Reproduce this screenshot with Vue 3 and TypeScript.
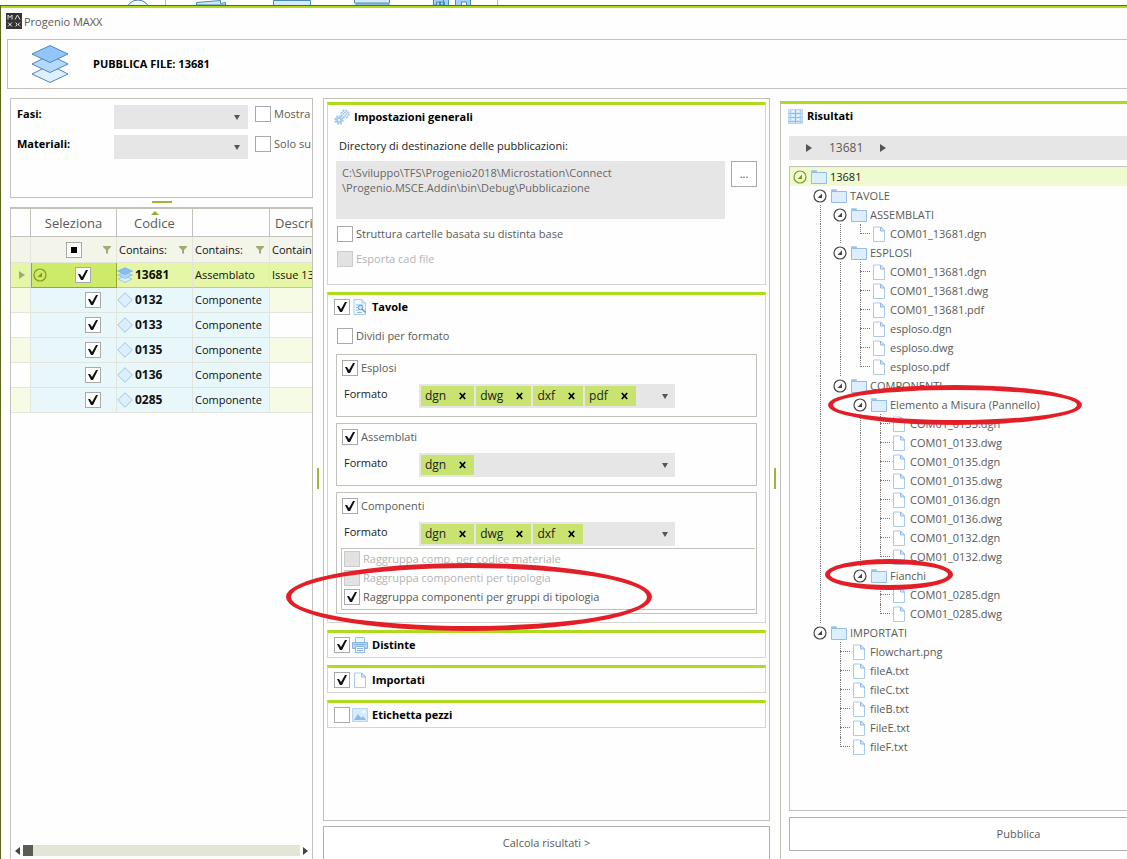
<script setup lang="ts">
import { ref } from 'vue'

interface TreeNode {
  name: string
  children?: TreeNode[]
  mark?: string
}

interface TreeRow {
  name: string
  folder: boolean
  level: number
  guides: boolean[]
  last: boolean
  mark?: string
}

const files = (...names: string[]): TreeNode[] => names.map((name) => ({ name }))

const tree: TreeNode[] = [
  {
    name: '13681',
    children: [
      {
        name: 'TAVOLE',
        children: [
          { name: 'ASSEMBLATI', children: files('COM01_13681.dgn') },
          {
            name: 'ESPLOSI',
            children: files(
              'COM01_13681.dgn',
              'COM01_13681.dwg',
              'COM01_13681.pdf',
              'esploso.dgn',
              'esploso.dwg',
              'esploso.pdf',
            ),
          },
          {
            name: 'COMPONENTI',
            children: [
              {
                name: 'Elemento a Misura (Pannello)',
                mark: 'mark-panel',
                children: files(
                  'COM01_0133.dgn',
                  'COM01_0133.dwg',
                  'COM01_0135.dgn',
                  'COM01_0135.dwg',
                  'COM01_0136.dgn',
                  'COM01_0136.dwg',
                  'COM01_0132.dgn',
                  'COM01_0132.dwg',
                ),
              },
              { name: 'Fianchi', mark: 'mark-sides', children: files('COM01_0285.dgn', 'COM01_0285.dwg') },
            ],
          },
        ],
      },
      {
        name: 'IMPORTATI',
        children: files('Flowchart.png', 'fileA.txt', 'fileC.txt', 'fileB.txt', 'FileE.txt', 'fileF.txt'),
      },
    ],
  },
]

// guides[k] tells whether the ancestor at level k has a later sibling, so its line continues past this row
function flatten(nodes: TreeNode[], level = 0, guides: boolean[] = []): TreeRow[] {
  return nodes.flatMap((node, i) => {
    const last = i === nodes.length - 1
    const row: TreeRow = { name: node.name, folder: !!node.children, level, guides, last, mark: node.mark }
    return [row, ...flatten(node.children ?? [], level + 1, [...guides, !last])]
  })
}

const treeRows = flatten(tree)

const parts = ref([
  { code: '0132', checked: true },
  { code: '0133', checked: true },
  { code: '0135', checked: true },
  { code: '0136', checked: true },
  { code: '0285', checked: true },
])

const outputs = ref([
  { id: 'esplosi', label: 'Esplosi', on: true, formats: ['dgn', 'dwg', 'dxf', 'pdf'] },
  { id: 'assemblati', label: 'Assemblati', on: true, formats: ['dgn'] },
  { id: 'componenti', label: 'Componenti', on: true, formats: ['dgn', 'dwg', 'dxf'] },
])

const extras = ref([
  { id: 'distinte', label: 'Distinte', icon: 'i-print', on: true },
  { id: 'importati', label: 'Importati', icon: 'i-file', on: true },
  { id: 'etichetta', label: 'Etichetta pezzi', icon: 'i-image', on: false },
])

const directory = ref('C:\\Sviluppo\\TFS\\Progenio2018\\Microstation\\Connect\n\\Progenio.MSCE.Addin\\bin\\Debug\\Pubblicazione')

function removeFormat(list: string[], format: string) {
  list.splice(list.indexOf(format), 1)
}
</script>

<template>
  <div class="page">
    <svg class="defs" width="0" height="0" aria-hidden="true">
      <symbol id="i-layers" viewBox="0 0 38 38">
        <path d="M1 29 19 20 37 29 19 37.500z" fill="#deeffd" stroke="#4f87bd" />
        <path d="M1 19 19 10 37 19 19 27.500z" fill="#b5d9fb" stroke="#4f87bd" />
        <path d="M1 9 19 .6 37 9 19 17.500z" fill="#93c6f8" stroke="#4f87bd" />
      </symbol>
      <symbol id="i-layers-small" viewBox="0 0 16 16">
        <path d="M1 12 8 9 15 12 8 15.500z" fill="#d9ecfd" stroke="#8dbbe6" stroke-width=".7" />
        <path d="M.5 8 8 5 15.500 8 8 11.500z" fill="#aed5fa" stroke="#8dbbe6" stroke-width=".7" />
        <path d="M.5 4 8 .8 15.500 4 8 7.500z" fill="#86bdf4" stroke="#7aaee0" stroke-width=".7" />
      </symbol>
      <symbol id="i-diamond" viewBox="0 0 16 16">
        <path d="M8 .7 15.300 8 8 15.300 .7 8z" fill="#ddeefe" stroke="#a3c2e2" />
      </symbol>
      <symbol id="i-funnel" viewBox="0 0 8 8">
        <path d="M0 0h8v1L5 4v4L3 7V4L0 1z" fill="#a0aa78" />
      </symbol>
      <symbol id="i-expander" viewBox="0 0 14 14">
        <circle cx="7" cy="7" r="6" fill="none" stroke="currentColor" stroke-width="1.200" />
        <path d="M9 4.500V9H4.500z" fill="currentColor" />
      </symbol>
      <symbol id="i-folder" viewBox="0 0 16 14">
        <path d="M.5 2V.8h5V2" fill="#9cc4ea" stroke="#9cc4ea" />
        <path d="M.5 2.500h15v11H.5z" fill="#ddeffe" stroke="#94bde5" />
      </symbol>
      <symbol id="i-file" viewBox="0 0 16 16">
        <path d="M2.500 1h7l4 4v10.500h-11z" fill="#fff" stroke="#a9cbed" />
        <path d="M9.500 1v4h4z" fill="#e3f0fd" stroke="#8fb8e2" />
      </symbol>
      <symbol id="i-drawing" viewBox="0 0 16 16">
        <path d="M2 .5h8l3.500 3.500v11.500H2z" fill="#f1f8ff" stroke="#a9cbed" />
        <path d="M10 .5V4h3.500" fill="none" stroke="#a9cbed" />
        <path d="M4 6h7M4 8.500h2M4 11h3M5 13.500h5" stroke="#8fbbe8" />
        <circle cx="8.500" cy="8.500" r="2.200" fill="#cfe5fb" stroke="#5f9bd8" />
        <path d="M10 10l3.500 3.500" stroke="#5f9bd8" stroke-width="1.500" />
      </symbol>
      <symbol id="i-print" viewBox="0 0 16 16">
        <path d="M3.500 .5h9v5h-9z" fill="#eaf5ff" stroke="#9cc3ea" />
        <path d="M.5 5.500h15v6H.5z" fill="#b3d6f8" stroke="#85b3e2" />
        <path d="M3.500 9.500h9v6h-9z" fill="#f0f8ff" stroke="#8fb9e4" />
        <path d="M5 11.500h6M5 13.500h6M2 7.500h12" stroke="#8fb9e4" />
      </symbol>
      <symbol id="i-image" viewBox="0 0 16 14">
        <path d="M.5 .5h15v13H.5z" fill="#d9ecfe" stroke="#b7d5f3" />
        <path d="M2 12 6 6l3 4 2-2 3 4z" fill="#8cbcec" />
        <circle cx="11.500" cy="4" r="1.300" fill="#fff" />
      </symbol>
      <symbol id="i-gears" viewBox="0 0 16 16">
        <g fill="none" stroke="#9cc5ee">
          <circle cx="5" cy="11" r="2" stroke-width="1.600" />
          <circle cx="5" cy="11" r="3.900" stroke-width="1.600" stroke-dasharray="1.700 1.360" />
          <circle cx="5" cy="11" r="3.200" stroke-width=".8" />
          <circle cx="11" cy="5" r="1.500" />
          <circle cx="11" cy="5" r="3.900" stroke-width="1.500" stroke-dasharray="1.700 1.360" />
          <circle cx="11" cy="5" r="3.100" stroke-width=".7" />
        </g>
      </symbol>
      <symbol id="i-results" viewBox="0 0 15 15">
        <path d="M.5 .5h14v14H.5z" fill="#d3e7fa" stroke="#b9d6f2" />
        <path d="M1 4.500h13M1 8.500h13M1 12.500h13" stroke="#94bde6" />
        <path d="M2.500 1v13M12.500 1v13" stroke="#b0d0f0" />
        <path d="M7.500 1v13" stroke="#8fb9e4" />
        <path d="M4 2.500h2M4 6.500h2M4 10.500h2M9 2.500h2M9 6.500h2M9 10.500h2" stroke="#f4faff" />
      </symbol>
    </svg>

    <svg class="ribbon" width="520" height="5" viewBox="0 0 520 5" aria-hidden="true">
      <circle cx="138" cy="12" r="12" fill="#f2f9ff" stroke="#4a7db5" />
      <path d="M165.500 0V5M497.500 0V5" stroke="#b9bcb0" />
      <path d="M196.500 5V2.500l24-2v3l5-1v2.500z" fill="#cde6fb" stroke="#4a8cb5" />
      <path d="M273.500 5V.5h37V5M354.500 -1v4h35v-4M356 5V4h33v1" fill="#d5ebfd" stroke="#4a8cb5" />
      <path d="M393.500 5V5M433.500 5V-1h10v6h-3V2h-4v3zM433.500 -1h15v6.500h-4V2h-5v3.500h-6zM455.500 -1h15v6.500h-4V2h-5v3.500h-6z" fill="#a3d0fa" stroke="#4a8cb5" />
    </svg>

    <main class="window">
      <header class="titlebar">
        <svg width="16" height="16" viewBox="0 0 16 16" aria-hidden="true">
          <path d="M0 0h16v16H0z" fill="#343434" />
          <path
            d="M2 6.500V2l2 2.500L6 2v4.500M9 6.500 11.500 2 14 6.500M2 9.500l1.500 1.500v1L2 13.500M6 9.500 4.500 11v1L6 13.500M9.500 9.500 11 11v1l-1.500 1.500M14 9.500 12.500 11v1l1.500 1.500"
            fill="none"
            stroke="#ddd"
          />
        </svg>
        <span>Progenio MAXX</span>
      </header>

      <section class="banner">
        <svg width="38" height="38"><use href="#i-layers" /></svg>
        <h1>PUBBLICA FILE: 13681</h1>
      </section>

      <div class="columns">
        <div class="parts">
          <form class="filters">
            <label class="strong" for="fasi">Fasi:</label>
            <span class="dropdown"><select id="fasi"><option></option></select></span>
            <label class="check"><input type="checkbox" /><span>Mostra</span></label>
            <label class="strong" for="materiali">Materiali:</label>
            <span class="dropdown"><select id="materiali"><option></option></select></span>
            <label class="check"><input type="checkbox" /><span>Solo su</span></label>
          </form>
          <div class="h-splitter"></div>
          <div class="grid">
            <table>
              <colgroup>
                <col class="c-mark" />
                <col class="c-select" />
                <col class="c-code" />
                <col class="c-type" />
                <col />
              </colgroup>
              <thead>
                <tr>
                  <th></th>
                  <th>Seleziona</th>
                  <th class="sorted">Codice</th>
                  <th></th>
                  <th class="start">Descri</th>
                </tr>
                <tr class="filter">
                  <td></td>
                  <td>
                    <div class="cell pick">
                      <input type="checkbox" class="mixed" aria-label="Seleziona tutto" />
                      <svg width="8" height="8"><use href="#i-funnel" /></svg>
                    </div>
                  </td>
                  <td><div class="cell between">Contains:<svg width="8" height="8"><use href="#i-funnel" /></svg></div></td>
                  <td><div class="cell between">Contains:<svg width="8" height="8"><use href="#i-funnel" /></svg></div></td>
                  <td>Contain</td>
                </tr>
              </thead>
              <tbody>
                <tr class="current">
                  <td><div class="cell center"><i class="arrow to-right muted"></i></div></td>
                  <td class="focused">
                    <div class="cell root">
                      <svg width="14" height="14"><use href="#i-expander" /></svg>
                      <input type="checkbox" checked aria-label="13681" />
                    </div>
                  </td>
                  <td class="code"><div class="cell"><svg width="16" height="16"><use href="#i-layers-small" /></svg>13681</div></td>
                  <td>Assemblato</td>
                  <td>Issue 13</td>
                </tr>
                <tr v-for="part in parts" :key="part.code">
                  <td></td>
                  <td class="tint"><div class="cell leaf"><input v-model="part.checked" type="checkbox" :aria-label="part.code" /></div></td>
                  <td class="tint code"><div class="cell"><svg width="16" height="16"><use href="#i-diamond" /></svg>{{ part.code }}</div></td>
                  <td class="tint">Componente</td>
                  <td></td>
                </tr>
              </tbody>
            </table>
            <div class="scrollbar">
              <i class="arrow to-left"></i>
              <div class="track"><div class="thumb"></div></div>
              <i class="arrow to-right"></i>
            </div>
          </div>
        </div>

        <div class="v-splitter"></div>

        <div class="options">
          <div class="settings">
            <section class="panel general">
              <h2><svg width="16" height="16"><use href="#i-gears" /></svg>Impostazioni generali</h2>
              <label class="dir-label" for="dir">Directory di destinazione delle pubblicazioni:</label>
              <div class="dir">
                <textarea id="dir" v-model="directory" spellcheck="false"></textarea>
                <button type="button" aria-label="Sfoglia">...</button>
              </div>
              <label class="check"><input type="checkbox" /><span>Struttura cartelle basata su distinta base</span></label>
              <label class="check off"><input type="checkbox" disabled /><span>Esporta cad file</span></label>
            </section>

            <section class="panel tavole">
              <h2>
                <input id="tavole" type="checkbox" checked />
                <label for="tavole"><svg width="16" height="16"><use href="#i-drawing" /></svg>Tavole</label>
              </h2>
              <label class="check divide"><input type="checkbox" /><span>Dividi per formato</span></label>
              <fieldset v-for="output in outputs" :key="output.id">
                <label class="check"><input v-model="output.on" type="checkbox" /><span>{{ output.label }}</span></label>
                <div class="format">
                  <span class="format-label">Formato</span>
                  <div class="tags">
                    <span v-for="f in output.formats" :key="f" class="tag">
                      {{ f }}
                      <button type="button" :aria-label="'Rimuovi ' + f" @click="removeFormat(output.formats, f)">
                        <svg width="7" height="8" viewBox="0 0 7 8"><path d="M.8 1l5.400 6M6.200 1 .8 7" stroke="#000" stroke-width="1.700" /></svg>
                      </button>
                    </span>
                    <button type="button" class="open" aria-label="Apri"><i class="arrow to-bottom"></i></button>
                  </div>
                </div>
                <div v-if="output.id === 'componenti'" class="grouping">
                  <label class="check off"><input type="checkbox" disabled /><span>Raggruppa comp. per codice materiale</span></label>
                  <label class="check off"><input type="checkbox" disabled /><span>Raggruppa componenti per tipologia</span></label>
                  <label class="check"><input type="checkbox" checked /><span>Raggruppa componenti per gruppi di tipologia</span><i class="mark mark-group"></i></label>
                </div>
              </fieldset>
            </section>

            <section v-for="extra in extras" :key="extra.id" class="panel">
              <h2>
                <input :id="extra.id" v-model="extra.on" type="checkbox" />
                <label :for="extra.id"><svg width="16" height="16"><use :href="'#' + extra.icon" /></svg>{{ extra.label }}</label>
              </h2>
            </section>
          </div>
          <button type="button" class="action">Calcola risultati &gt;</button>
        </div>

        <div class="v-splitter"></div>

        <section class="results">
          <h2><svg width="15" height="15"><use href="#i-results" /></svg>Risultati</h2>
          <nav class="crumbs">
            <i class="arrow to-right"></i><a href="#">13681</a><i class="arrow to-right"></i>
          </nav>
          <ul class="tree">
            <li v-for="(row, i) in treeRows" :key="i" :class="{ selected: i === 0 }">
              <span v-for="(g, n) in row.guides" :key="n" class="guide" :class="{ line: g }"></span>
              <span v-if="row.folder" class="node"><svg width="14" height="14"><use href="#i-expander" /></svg></span>
              <span v-else class="node branch" :class="{ end: row.last }"></span>
              <svg v-if="row.folder" class="glyph" width="16" height="14"><use href="#i-folder" /></svg>
              <svg v-else class="glyph" width="16" height="16"><use href="#i-file" /></svg>
              <span>{{ row.name }}</span>
              <i v-if="row.mark" class="mark" :class="row.mark"></i>
            </li>
          </ul>
          <button type="button" class="action">Pubblica</button>
        </section>
      </div>
    </main>
  </div>
</template>

<style>
body {
  margin: 0;
  background: #fdfefd;
}
</style>

<style scoped>
* {
  box-sizing: border-box;
}

.page {
  display: flex;
  flex-direction: column;
  min-height: 100vh;
  overflow: hidden;
  font: 11px/16px 'Open Sans', 'Noto Sans', sans-serif;
  color: #5a5b58;
  background: #fdfefd;
}

.defs {
  position: absolute;
}

.ribbon {
  display: block;
  flex: none;
}

svg {
  flex: none;
}

.window {
  flex: 1;
  display: flex;
  flex-direction: column;
  border-top: 1px solid #5b6620;
  border-left: 1px solid #5b6620;
}

.titlebar {
  display: flex;
  align-items: center;
  gap: 2px;
  height: 33px;
  padding: 0 5px 6px;
  border-top: 2px solid #afdb1e;
}

.titlebar span {
  padding-top: 2px;
}

.banner {
  display: flex;
  align-items: center;
  gap: 24px;
  height: 50px;
  margin-left: 6px;
  padding-left: 23px;
  border: 1px solid #c2c2ba;
  border-right: 0;
}

h1,
h2 {
  margin: 0;
  font-size: 11px;
  line-height: 16px;
  font-weight: 700;
  color: #000;
}

.columns {
  flex: 1;
  display: grid;
  grid-template-columns: minmax(0, 303fr) 10px minmax(0, 447fr) 10px minmax(0, 347fr);
  margin: 9px 0 0 9px;
}

.parts,
.options,
.results {
  display: flex;
  flex-direction: column;
}

.filters {
  display: grid;
  grid-template-columns: 97px 134px 1fr;
  grid-auto-rows: 24px;
  row-gap: 6px;
  height: 100px;
  padding: 6px 0 0 6px;
  border: 1px solid #c2c2ba;
  overflow: hidden;
}

.strong {
  padding-top: 1px;
  font-weight: 700;
  color: #000;
}

.filters .check {
  padding: 1px 0 0 7px;
  align-self: start;
}

.dropdown {
  position: relative;
}

.dropdown select {
  width: 100%;
  height: 24px;
  border: 0;
  border-radius: 0;
  background: #e6e6e6;
  appearance: none;
}

.dropdown::after {
  content: '';
  position: absolute;
  right: 8px;
  top: 10px;
  border: 3px solid transparent;
  border-top: 5px solid #555;
  border-bottom: 0;
}

input[type='checkbox'] {
  flex: none;
  position: relative;
  width: 16px;
  height: 16px;
  margin: 0;
  border: 1px solid #a9a9a9;
  background: #fff;
  appearance: none;
}

input[type='checkbox']:checked::after {
  content: '';
  position: absolute;
  inset: 0;
  background: #111;
  clip-path: polygon(2px 6px, 4px 6px, 6px 9px, 10px 2px, 12px 2px, 7px 12px, 5px 12px);
}

input.mixed::after {
  content: '';
  position: absolute;
  inset: 4px;
  background: #000;
}

input[type='checkbox']:disabled {
  border-color: #cbcbcb;
  background: #e2e2e2;
}

.check {
  display: flex;
  align-items: center;
  gap: 3px;
  white-space: nowrap;
}

.check.off {
  color: #b4b4b4;
}

.h-splitter {
  width: 20px;
  height: 2px;
  margin: 3px auto 4px;
  background: #a0b53c;
}

.v-splitter {
  align-self: center;
  justify-self: center;
  width: 2px;
  height: 21px;
  background: #a0b53c;
}

.grid {
  flex: 1;
  display: flex;
  flex-direction: column;
  justify-content: space-between;
  border: solid #c2c2ba;
  border-width: 2px 1px 0;
  overflow: hidden;
}

table {
  width: 100%;
  table-layout: fixed;
  border-collapse: separate;
  border-spacing: 0;
  color: #111;
}

.c-mark {
  width: 20px;
}

.c-select {
  width: 86px;
}

.c-code {
  width: 76px;
}

.c-type {
  width: 77px;
}

th,
td {
  height: 25px;
  padding: 0 0 0 2px;
  border-right: 1px solid #e3e5dc;
  border-bottom: 1px solid #e3e5dc;
  text-align: left;
  white-space: nowrap;
  overflow: hidden;
}

th:last-child,
td:last-child {
  border-right: 0;
}

th {
  position: relative;
  height: 28px;
  padding: 0;
  border-color: #c2c2ba;
  font-size: 13px;
  font-weight: 400;
  color: #5a5b58;
  text-align: center;
}

th.start {
  padding-left: 5px;
  text-align: left;
}

th.sorted::before {
  content: '';
  position: absolute;
  top: 2px;
  left: 50%;
  margin-left: -4px;
  border: 4px solid transparent;
  border-top: 0;
  border-bottom-color: #94ac2a;
}

.filter td {
  height: 26px;
  background: #f3f5eb;
}

.cell {
  display: flex;
  align-items: center;
}

.center {
  justify-content: center;
}

.between {
  justify-content: space-between;
  padding-right: 5px;
}

.pick {
  justify-content: space-between;
  padding: 0 5px 0 33px;
}

.root {
  justify-content: space-between;
  padding-right: 25px;
  color: #7f9b1e;
}

.leaf {
  justify-content: flex-end;
  padding-right: 15px;
}

.code {
  padding-left: 0;
  font-size: 12px;
  font-weight: 700;
}

.code .cell {
  gap: 2px;
}

tbody tr:nth-child(even) td {
  background: #f6fbe6;
}

tbody tr .tint.tint {
  background: #e8f8fa;
}

.current td {
  background: #e5f6a6;
  border-bottom-color: #bddd33;
}

.current td.focused {
  padding-left: 1px;
  background: #cdea68;
  border-left: 1px solid #94ac2a;
  border-right-color: #94ac2a;
  border-bottom-color: #94ac2a;
}

.arrow {
  flex: none;
  display: block;
  width: 0;
  height: 0;
  border: 4px solid transparent;
}

.arrow.to-right {
  border-left: 6px solid #555;
  border-right: 0;
}

.arrow.to-right.muted {
  border-left-color: #a0aa78;
}

.arrow.to-left {
  border-right: 5px solid #444;
  border-left: 0;
}

.arrow.to-bottom {
  border: 3px solid transparent;
  border-top: 5px solid #555;
  border-bottom: 0;
}

.scrollbar {
  display: flex;
  align-items: center;
  gap: 3px;
  height: 11px;
  margin: 0 4px 3px;
}

.scrollbar .arrow.to-right {
  border-left: 5px solid #444;
}

.track {
  flex: 1;
  height: 11px;
  background: #e3e6d5;
}

.thumb {
  width: 10px;
  height: 11px;
  background: #5a5b54;
}

.settings {
  flex: 1;
  display: flex;
  flex-direction: column;
  gap: 7px;
  padding: 3px;
  border: 1px solid #c2c2ba;
}

.panel {
  padding: 4px 8px 4px 6px;
  border: 1px solid #d6d6d0;
  border-top: 3px solid #afdb1e;
}

h2 {
  display: flex;
  align-items: center;
  gap: 4px;
}

h2 label {
  display: flex;
  align-items: center;
  gap: 4px;
}

h2 input {
  margin-right: -2px !important;
}

.general {
  padding-bottom: 17px;
}

.general h2,
.tavole h2 {
  margin-bottom: 13px;
}

.dir-label {
  display: block;
  margin: 0 0 7px 5px;
  color: #222;
}

.dir {
  display: flex;
  align-items: flex-start;
  gap: 6px;
  margin: 0 0 7px 2px;
}

textarea {
  flex: 1;
  height: 58px;
  padding: 4px 6px;
  border: 0;
  background: #e6e6e6;
  color: #666;
  font: inherit;
  line-height: 15px;
  resize: none;
}

.dir button {
  width: 26px;
  height: 26px;
  padding: 0;
  border: 1px solid #a9a9a9;
  background: #fff;
  color: #444;
  font: inherit;
}

.general .check {
  margin: 0 0 9px 3px;
}

.general .check:last-child {
  margin-bottom: 0;
}

.tavole {
  padding-bottom: 8px;
}

.tavole .divide {
  margin: 0 0 10px 3px;
}

fieldset {
  margin: 0 0 0 2px;
  padding: 5px 0 8px 5px;
  border: 1px solid #c2c2ba;
}

fieldset + fieldset {
  margin-top: 6px;
}

fieldset:last-child {
  padding-bottom: 3px;
}

.format {
  display: flex;
  margin-top: 8px;
  padding-left: 2px;
}

.format-label {
  width: 75px;
  padding-top: 2px;
  color: #222;
}

.tags {
  flex: 0 1 256px;
  display: flex;
  gap: 2px;
  height: 24px;
  padding: 2px;
  background: #e6e6e6;
}

.tag {
  display: flex;
  align-items: center;
  gap: 13px;
  height: 20px;
  padding: 0 8px 0 4px;
  background: #c8e370;
  color: #222;
  font-size: 12px;
}

.tag button,
.open {
  display: flex;
  align-items: center;
  padding: 0;
  border: 0;
  background: none;
}

.open {
  margin-left: auto;
  padding-right: 5px;
}

.grouping {
  display: grid;
  gap: 3px;
  margin: 2px 1px 0 -1px;
  padding: 2px 0 4px 2px;
  border: 1px solid #c2c2ba;
  border-right: 0;
}

.grouping .check {
  position: relative;
}

.mark {
  position: absolute;
  z-index: 2;
  border: 5px solid #e41e26;
  border-radius: 50%;
  pointer-events: none;
}

.mark-group {
  left: -58px;
  top: -26px;
  width: 366px;
  height: 68px;
}

.mark-panel {
  left: 38px;
  top: -10px;
  width: 254px;
  height: 40px;
}

.mark-sides {
  left: 35px;
  top: -7px;
  width: 128px;
  height: 31px;
}

.action {
  height: 34px;
  padding: 0;
  border: 1px solid #b0b0b0;
  background: #fff;
  color: #5a5b58;
  font: inherit;
}

.options .action {
  flex: none;
  height: 33px;
  margin-top: 5px;
  border-bottom: 0;
}

.results {
  margin-top: 3px;
  padding: 4px 0 8px 7px;
  border-left: 1px solid #c2c2ba;
  border-top: 3px solid #afdb1e;
}

.results h2 {
  margin-bottom: 12px;
}

.crumbs {
  display: flex;
  align-items: center;
  gap: 17px;
  height: 24px;
  margin-left: 1px;
  padding-left: 17px;
  background: #e6e6e6;
  font-size: 12px;
}

.crumbs a {
  color: #5a5b58;
  text-decoration: none;
}

.tree {
  flex: 1;
  margin: 6px 0 6px 1px;
  padding: 0;
  border: 1px solid #c2c2ba;
  border-right: 0;
  list-style: none;
}

.tree li {
  position: relative;
  display: flex;
  align-items: center;
  height: 19px;
  white-space: nowrap;
}

.tree .selected {
  background: #effad1;
  color: #222;
}

.guide,
.node {
  flex: none;
  position: relative;
  width: 20px;
  height: 19px;
}

.node {
  display: flex;
  align-items: center;
  justify-content: center;
  color: #444;
}

.selected .node {
  color: #7f9b1e;
}

.guide.line::before,
.branch::before {
  content: '';
  position: absolute;
  left: 10px;
  top: 0;
  height: 19px;
  border-left: 1px dotted #777;
}

.branch.end::before {
  height: 10px;
}

.branch::after {
  content: '';
  position: absolute;
  left: 10px;
  right: 0;
  top: 9px;
  border-top: 1px dotted #777;
}

.glyph {
  margin: 0 3px 0 1px;
}

.results .action {
  width: calc(100% + 120px);
  margin-left: 1px;
}
</style>
